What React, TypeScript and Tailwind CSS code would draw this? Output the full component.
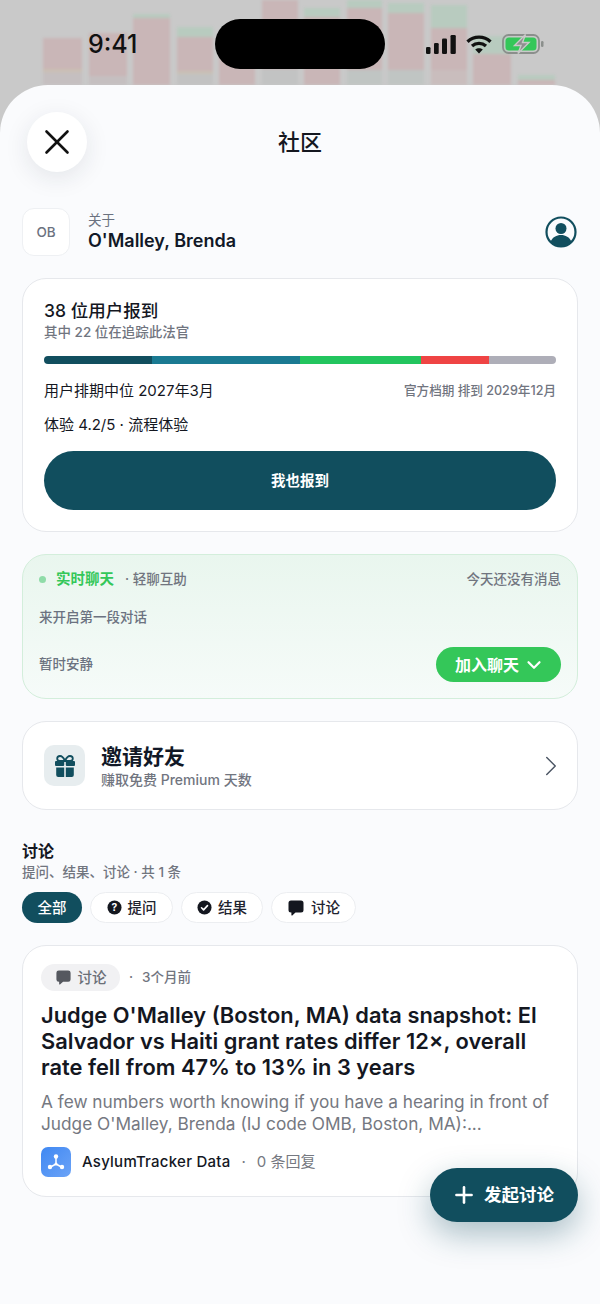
import { X, ChevronRight, ChevronDown, Plus } from 'lucide-react';

const font = 'font-["Inter","Noto_Sans_CJK_SC",sans-serif]';

// blurred chart behind the sheet: offset, green cap, pink body, lower band
const backdropBars = [
  { pad: 'mt-[38px]', w: 'w-[39px]', cap: 'h-0', body: 'h-[31px]', low: 'h-[16px]', band: 'bg-gradient-to-b from-[#cdbfae] to-[#c5bfc0] to-30%' },
  { pad: 'mt-[33px]', w: 'w-[38px]', cap: 'h-0', body: 'h-[43px]', low: 'h-[9px]', band: 'bg-[#c5bfc0]' },
  { pad: 'mt-[14px]', w: 'w-[37px]', cap: 'h-[4px]', body: 'h-[67px]', low: 'h-0', band: '' },
  { pad: 'mt-[27px]', w: 'w-[36px]', cap: 'h-[10px]', body: 'h-[34px]', low: 'h-[14px]', band: 'bg-gradient-to-b from-[#cdbfae] to-[#c2c2c2] to-30%' },
  { pad: 'mt-[40px]', w: 'w-[36px]', cap: 'h-0', body: 'h-[45px]', low: 'h-0', band: '' },
  { pad: 'mt-0', w: 'w-[36px]', cap: 'h-0', body: 'h-[69px]', low: 'h-[16px]', band: 'bg-[#c2c3c3]' },
  { pad: 'mt-[8px]', w: 'w-[36px]', cap: 'h-[9px]', body: 'h-[68px]', low: 'h-0', band: '' },
  { pad: 'mt-0', w: 'w-[35px]', cap: 'h-[8px]', body: 'h-[62px]', low: 'h-[15px]', band: 'bg-[#c0c5c3]' },
  { pad: 'mt-[3px]', w: 'w-[36px]', cap: 'h-[10px]', body: 'h-[57px]', low: 'h-[15px]', band: 'bg-[#c0c5c3]' },
  { pad: 'mt-[5px]', w: 'w-[36px]', cap: 'h-[23px]', body: 'h-[42px]', low: 'h-[15px]', band: 'bg-[#c9bdbd]' },
  { pad: 'mt-[36px]', w: 'w-[38px]', cap: 'h-[18px]', body: 'h-[31px]', low: 'h-0', band: '' },
  { pad: 'mt-[75px]', w: 'w-[37px]', cap: 'h-[5px]', body: 'h-[5px]', low: 'h-0', band: '' },
];

function ChatBubble({ className }: { className: string }) {
  return (
    <svg viewBox="0 0 18 18" className={className} fill="currentColor">
      <path d="M4 1.5h10A2.5 2.5 0 0 1 16.5 4v7a2.5 2.5 0 0 1-2.500 2.500H8.500L5.300 16.400c-.4.300-.9 0-.9-.5v-2.400H4A2.500 2.500 0 0 1 1.500 11V4A2.500 2.500 0 0 1 4 1.500z" />
    </svg>
  );
}

function FilterPill({ icon, label, width }: { icon: React.ReactNode; label: string; width: string }) {
  return (
    <div className={`flex h-[31px] items-center justify-center gap-[6px] rounded-full border border-[#eceef1] bg-white text-[14.500px] font-medium text-[#1f2430] ${width}`}>
      {icon}
      <span>{label}</span>
    </div>
  );
}

export default function App() {
  return (
    <div className={`relative h-[1304px] w-[600px] overflow-hidden bg-[#c9c9c9] ${font}`}>
      {/* Backdrop chart */}
      <div className="absolute left-[43px] top-0 flex gap-[6.500px] blur-[1.500px]">
        {backdropBars.map((bar, i) => (
          <div key={i} className={`flex flex-col ${bar.w} ${bar.pad}`}>
            <div className={`bg-[#b8cbbf] ${bar.cap}`} />
            <div className={`bg-[#c9b6b7] ${bar.body}`} />
            <div className={`${bar.band} ${bar.low}`} />
          </div>
        ))}
      </div>

      {/* Status bar */}
      <div className="relative flex h-[85px] items-start">
        <span className="ml-[88px] mt-[28px] text-[25px] leading-[32px] font-medium text-[#111]">9:41</span>
        <div className="absolute left-[215px] top-[19px] h-[50px] w-[170px] rounded-full bg-black" />
        <div className="absolute left-[426px] top-[34px] flex items-center gap-[10px]">
          <svg viewBox="0 0 30 19" className="h-[19px] w-[30px]" fill="#111">
            <rect x="0" y="12" width="4.500" height="7" rx="1.300" />
            <rect x="8" y="8" width="4.700" height="11" rx="1.300" />
            <rect x="16" y="3.500" width="5" height="15.500" rx="1.300" />
            <rect x="24.500" y="0" width="5.300" height="19" rx="1.300" />
          </svg>
          <svg viewBox="0 0 26 19" className="h-[19px] w-[26px]" fill="none" stroke="#111" strokeWidth="3.300">
            <path d="M1.500 6.800c6.500-6.200 16.500-6.200 23 0" />
            <path d="M6 11c4-3.600 10-3.600 14 0" />
            <path d="M13 18.500l-3.800-4c2.100-1.700 5.500-1.700 7.600 0z" fill="#111" stroke="none" />
          </svg>
          <svg viewBox="0 0 42 20" className="h-[20px] w-[42px]">
            <rect x="1" y="1" width="36" height="18" rx="5.500" fill="none" stroke="#8b8f8c" strokeWidth="1.800" />
            <rect x="3.500" y="3.500" width="31" height="13" rx="3.500" fill="#34c759" />
            <rect x="39" y="7" width="2.500" height="6" rx="1.200" fill="#8b8f8c" />
            <path d="M23.500 0.500L12.500 11.500h6.500l-3 8L27 8.500h-6.500z" fill="#8f8f8f" stroke="#c9c9c9" strokeWidth="1.400" />
          </svg>
        </div>
      </div>

      {/* Sheet */}
      <div className="relative h-[1219px] rounded-t-[48px] bg-[#fafbfd] px-[22px]">
        <div className="relative flex h-[114px] items-center justify-center pb-[27px] pt-[27px]">
          <button className="absolute left-[5px] top-[27px] flex h-[60px] w-[60px] items-center justify-center rounded-full bg-white shadow-[0_6px_24px_rgba(30,40,60,0.10)]">
            <X className="h-[42px] w-[42px] text-[#111]" strokeWidth={1.500} />
          </button>
          <h1 className="text-[22px] leading-[30px] font-medium text-[#14171f]">社区</h1>
        </div>

        {/* Judge row */}
        <div className="mt-[9px] flex h-[48px] items-center">
          <div className="flex h-[48px] w-[48px] items-center justify-center rounded-[12px] border border-[#eef0f3] bg-white text-[13.500px] font-medium text-[#6b7280]">
            OB
          </div>
          <div className="ml-[18px] flex flex-col pt-[2px]">
            <span className="text-[13.500px] leading-[14px] text-[#6b7280]">关于</span>
            <span className="mt-[2px] text-[18px] leading-[24px] font-semibold text-[#111827]">O'Malley, Brenda</span>
          </div>
          <svg viewBox="0 0 32 32" className="ml-auto mr-[1px] h-[32px] w-[32px]">
            <circle cx="16" cy="16" r="14.500" fill="none" stroke="#114e5e" strokeWidth="2.200" />
            <circle cx="16" cy="12.500" r="5.500" fill="#114e5e" />
            <path d="M5.500 26c2-5 6-7 10.500-7s8.500 2 10.500 7c-2.500 2.800-6.300 4.500-10.500 4.500S8 28.800 5.500 26z" fill="#114e5e" />
          </svg>
        </div>

        {/* Check-in card */}
        <div className="mt-[22px] h-[254px] rounded-[24px] border border-[#e6e8ec] bg-white px-[21px] pt-[21px]">
          <div className="text-[17.500px] leading-[22px] font-medium text-[#14171f]">38 位用户报到</div>
          <div className="mt-[1px] text-[13.500px] leading-[18px] font-medium text-[#71757f]">其中 22 位在追踪此法官</div>
          <div className="mt-[15px] flex h-[8px] overflow-hidden rounded-full">
            <div className="flex-[8] bg-[#114e5e]" />
            <div className="flex-[11] bg-[#1a7a92]" />
            <div className="flex-[9] bg-[#22c55e]" />
            <div className="flex-[5] bg-[#ef4444]" />
            <div className="flex-[5] bg-[#aeaeb8]" />
          </div>
          <div className="mt-[16px] flex h-[22px] items-center justify-between">
            <span className="text-[15px] text-[#14171f]">用户排期中位 2027年3月</span>
            <span className="text-[12.600px] font-medium text-[#71757f]">官方档期 排到 2029年12月</span>
          </div>
          <div className="mt-[12px] text-[15px] leading-[22px] text-[#14171f]">体验 4.2/5 · 流程体验</div>
          <button className="mt-[15px] h-[59px] w-full rounded-[30px] bg-[#114e5e] text-[14.500px] font-semibold text-white">我也报到</button>
        </div>

        {/* Live chat card */}
        <div className="mt-[22px] h-[145px] rounded-[24px] border border-[#d3eedb] bg-gradient-to-b from-[#e9f6ee] to-[#f6fbf9] px-[16px] pt-[13px]">
          <div className="flex h-[22px] items-center text-[13.500px] font-medium text-[#71757f]">
            <span className="h-[7px] w-[7px] rounded-full bg-[#8fdca8]" />
            <span className="ml-[10px] text-[14.500px] font-semibold text-[#34c759]">实时聊天</span>
            <span className="ml-[11px]">· 轻聊互助</span>
            <span className="ml-auto">今天还没有消息</span>
          </div>
          <div className="mt-[17px] text-[13.500px] leading-[20px] font-medium text-[#6b7280]">来开启第一段对话</div>
          <div className="mt-[20px] flex h-[35px] items-center justify-between">
            <span className="text-[13.500px] font-medium text-[#6b7280]">暂时安静</span>
            <button className="flex h-[35px] w-[125px] items-center gap-[4px] rounded-full bg-[#34c759] pl-[19px] text-[16px] font-semibold text-white">
              加入聊天
              <ChevronDown className="h-[22px] w-[22px]" strokeWidth={2.400} />
            </button>
          </div>
        </div>

        {/* Invite card */}
        <div className="mt-[22px] flex h-[89px] items-center rounded-[24px] border border-[#e6e8ec] bg-white pl-[21px] pr-[9px]">
          <div className="flex h-[41px] w-[41px] items-center justify-center rounded-[10px] bg-[#e7edef]">
            <svg viewBox="0 0 24 24" className="h-[24px] w-[24px]" fill="#114e5e">
              <path d="M12 7C10.500 3.500 8.700 2 7 2 5.300 2 4.200 3.200 4.200 4.600 4.200 6 5.200 7 7 7zm0 0c1.500-3.500 3.300-5 5-5 1.700 0 2.800 1.200 2.800 2.600C19.800 6 18.800 7 17 7z" fill="none" stroke="#114e5e" strokeWidth="1.800" />
              <rect x="2" y="7" width="9.200" height="5" rx="1" />
              <rect x="12.800" y="7" width="9.200" height="5" rx="1" />
              <path d="M3.200 13.500h8V23H5.200a2 2 0 0 1-2-2zM12.800 13.500h8V21a2 2 0 0 1-2 2h-6z" />
            </svg>
          </div>
          <div className="ml-[16px] flex flex-col">
            <span className="text-[21px] leading-[28px] font-semibold text-[#111827]">邀请好友</span>
            <span className="text-[14px] leading-[18px] font-medium text-[#71757f]">赚取免费 Premium 天数</span>
          </div>
          <ChevronRight className="ml-auto h-[34px] w-[34px] text-[#4b5563]" strokeWidth={1} />
        </div>

        {/* Discussions */}
        <div className="mt-[30px] text-[16px] leading-[22px] font-semibold text-[#14171f]">讨论</div>
        <div className="text-[13.500px] leading-[20px] font-medium text-[#71757f]">提问、结果、讨论 · 共 1 条</div>
        <div className="mt-[10px] flex gap-[8px]">
          <div className="flex h-[31px] w-[60px] items-center justify-center rounded-full bg-[#114e5e] text-[14.500px] font-medium text-white">全部</div>
          <FilterPill
            width="w-[83px]"
            label="提问"
            icon={
              <svg viewBox="0 0 16 16" className="h-[15px] w-[15px]">
                <circle cx="8" cy="8" r="7.500" fill="#14171f" />
                <text x="8" y="11.800" textAnchor="middle" fontSize="11" fontWeight="700" fill="#fff">?</text>
              </svg>
            }
          />
          <FilterPill
            width="w-[82px]"
            label="结果"
            icon={
              <svg viewBox="0 0 16 16" className="h-[15px] w-[15px]">
                <circle cx="8" cy="8" r="7.500" fill="#14171f" />
                <path d="M4.800 8.300l2.200 2.200 4.200-4.500" fill="none" stroke="#fff" strokeWidth="1.700" strokeLinecap="round" strokeLinejoin="round" />
              </svg>
            }
          />
          <FilterPill width="w-[85px]" label="讨论" icon={<ChatBubble className="h-[18px] w-[18px] text-[#14171f]" />} />
        </div>

        {/* Post card */}
        <div className="mt-[22px] h-[252px] rounded-[24px] border border-[#e6e8ec] bg-white pl-[18px] pr-[20px] pt-[18px]">
          <div className="flex items-center">
            <div className="flex h-[27px] w-[79px] items-center justify-center gap-[6px] rounded-full bg-[#f1f1f3] text-[14.500px] font-medium text-[#6b6f78]">
              <ChatBubble className="h-[17px] w-[17px] text-[#55585f]" />
              讨论
            </div>
            <span className="ml-[9px] text-[13.500px] font-medium text-[#71757f]">·</span>
            <span className="ml-[9px] text-[13.500px] font-medium text-[#71757f]">3个月前</span>
          </div>
          <h2 className="mt-[11px] text-[21.850px] leading-[26px] font-semibold text-[#14171f]">
            Judge O'Malley (Boston, MA) data snapshot: El Salvador vs Haiti grant rates differ 12×, overall rate fell from 47% to 13% in 3 years
          </h2>
          <p className="mt-[11px] text-[17.250px] leading-[22px] text-[#757881]">
            A few numbers worth knowing if you have a hearing in front of Judge O'Malley, Brenda (IJ code OMB, Boston, MA):...
          </p>
          <div className="mt-[12px] flex items-center">
            <div className="flex h-[30px] w-[30px] items-center justify-center rounded-[7px] bg-gradient-to-br from-[#3f88f2] to-[#6ba3f7]">
              <svg viewBox="0 0 20 20" className="h-[20px] w-[20px]" fill="#fff" stroke="#fff">
                <path d="M10 5v7l-5.500 3M10 12l5.500 3" fill="none" strokeWidth="1.500" />
                <circle cx="10" cy="4.500" r="2.200" stroke="none" />
                <circle cx="4" cy="15" r="2.200" stroke="none" />
                <circle cx="16" cy="15" r="2.200" stroke="none" />
                <circle cx="10" cy="12" r="1.500" stroke="none" />
              </svg>
            </div>
            <span className="ml-[11px] text-[15px] font-medium tracking-[0.25px] text-[#14171f]">AsylumTracker Data</span>
            <span className="ml-[11px] text-[15px] text-[#757881]">·</span>
            <span className="ml-[11px] text-[15px] text-[#757881]">0 条回复</span>
          </div>
        </div>

        {/* Floating action */}
        <button className="absolute left-[430px] top-[1083px] flex h-[54px] w-[148px] items-center gap-[7px] rounded-full bg-[#114e5e] pl-[21px] text-[17.500px] font-semibold text-white shadow-[0_12px_32px_rgba(17,78,94,0.35)]">
          <Plus className="h-[26px] w-[26px]" strokeWidth={2.400} />
          发起讨论
        </button>
      </div>
    </div>
  );
}
